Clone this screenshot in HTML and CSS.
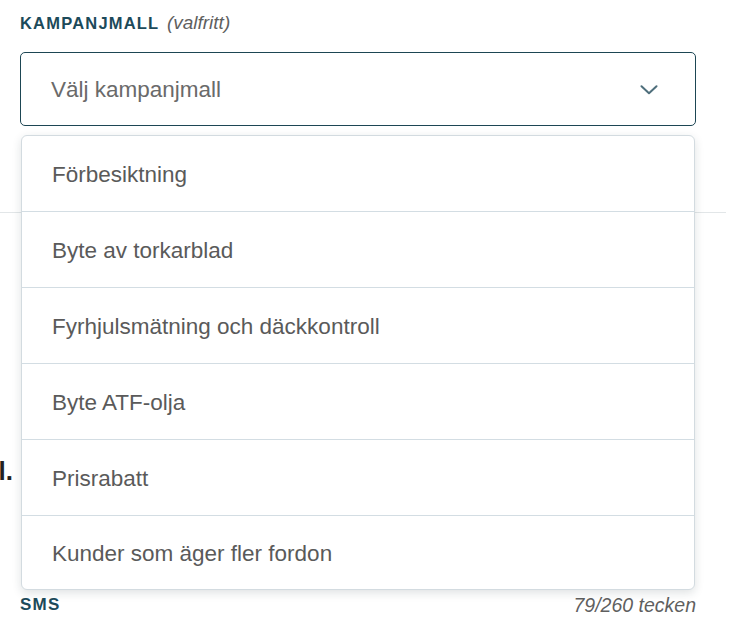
FILE: index.html
```html
<!DOCTYPE html>
<html lang="sv">
  <head>
    <meta charset="UTF-8" />
    <meta name="viewport" content="width=device-width, initial-scale=1.0" />
    <title>Kampanjmall</title>
    <link rel="stylesheet" href="styles.css">
  </head>
  <body>
    <div class="page">
      <section class="template-field">
        <div class="field-label">Kampanjmall <em>(valfritt)</em></div>

        <div class="select">
          <span class="select-placeholder">Välj kampanjmall</span>
          <svg class="chevron" width="18" height="10" viewBox="0 0 18 10">
            <path d="M1.5 1.2 L9 8.3 L16.5 1.2" fill="none" stroke="#4f6f7c" stroke-width="2" stroke-linecap="round" stroke-linejoin="round" />
          </svg>
        </div>

        <ul class="menu">
          <li>Förbesiktning</li>
          <li>Byte av torkarblad</li>
          <li>Fyrhjulsmätning och däckkontroll</li>
          <li>Byte ATF-olja</li>
          <li>Prisrabatt</li>
          <li>Kunder som äger fler fordon</li>
        </ul>
      </section>

      <hr class="divider" />

      <p class="message"><span>Välkommen in med din bil.</span></p>

      <div class="sms-row">
        <span class="sms-label">SMS</span>
        <span class="sms-count">79/260 tecken</span>
      </div>
    </div>
  </body>
</html>
```

FILE: styles.css
```css
body {
  margin: 0;
  font-family: "Liberation Sans", Arial, sans-serif;
  background: #ffffff;
}

.page {
  width: 726px;
}

.template-field {
  position: relative;
  padding: 12px 30px 0 20px;
}

.field-label {
  font-size: 16.5px;
  line-height: 22px;
  font-weight: bold;
  letter-spacing: 1.2px;
  text-transform: uppercase;
  color: #1c4a5a;
  margin-bottom: 18px;
}

.field-label em {
  font-weight: normal;
  font-size: 19px;
  letter-spacing: 0;
  text-transform: none;
  color: #5f5f5f;
  margin-left: 2px;
}

.select {
  box-sizing: border-box;
  height: 74px;
  display: flex;
  align-items: center;
  justify-content: space-between;
  padding: 2px 37px 0 30px;
  border: 1.5px solid #1d4654;
  border-radius: 5px;
}

.select-placeholder {
  font-size: 22.5px;
  color: #6a6a6a;
}

.chevron {
  display: block;
}

.menu {
  position: absolute;
  top: 135px;
  left: 21px;
  width: 674px;
  box-sizing: border-box;
  margin: 0;
  padding: 0;
  list-style: none;
  background: #ffffff;
  border: 1px solid #d3dbe0;
  border-radius: 6px;
  box-shadow: 0 3px 10px rgba(30, 50, 60, 0.14);
  z-index: 2;
}

.menu li {
  height: 76px;
  display: flex;
  align-items: center;
  padding: 2px 30px 0;
  box-sizing: border-box;
  font-size: 22.5px;
  color: #5a5a5a;
  border-bottom: 1px solid #d3dde3;
}

.menu li:last-child {
  border-bottom: none;
  height: 73px;
}

.divider {
  margin: 86px 0 0;
  border: none;
  border-top: 1px solid #e2e6e8;
}

.message {
  width: 13px;
  margin: 243px 0 0;
  display: flex;
  justify-content: flex-end;
  overflow: hidden;
  white-space: nowrap;
  font-size: 26px;
  font-weight: bold;
  line-height: 30px;
  color: #222222;
}

.sms-row {
  display: flex;
  justify-content: space-between;
  align-items: center;
  width: 676px;
  margin: 109px 0 0 20px;
  line-height: 20px;
}

.sms-label {
  font-size: 17px;
  font-weight: bold;
  letter-spacing: 1.2px;
  color: #1c4a5a;
}

.sms-count {
  font-size: 19.5px;
  font-style: italic;
  color: #5f5f5f;
}
```
